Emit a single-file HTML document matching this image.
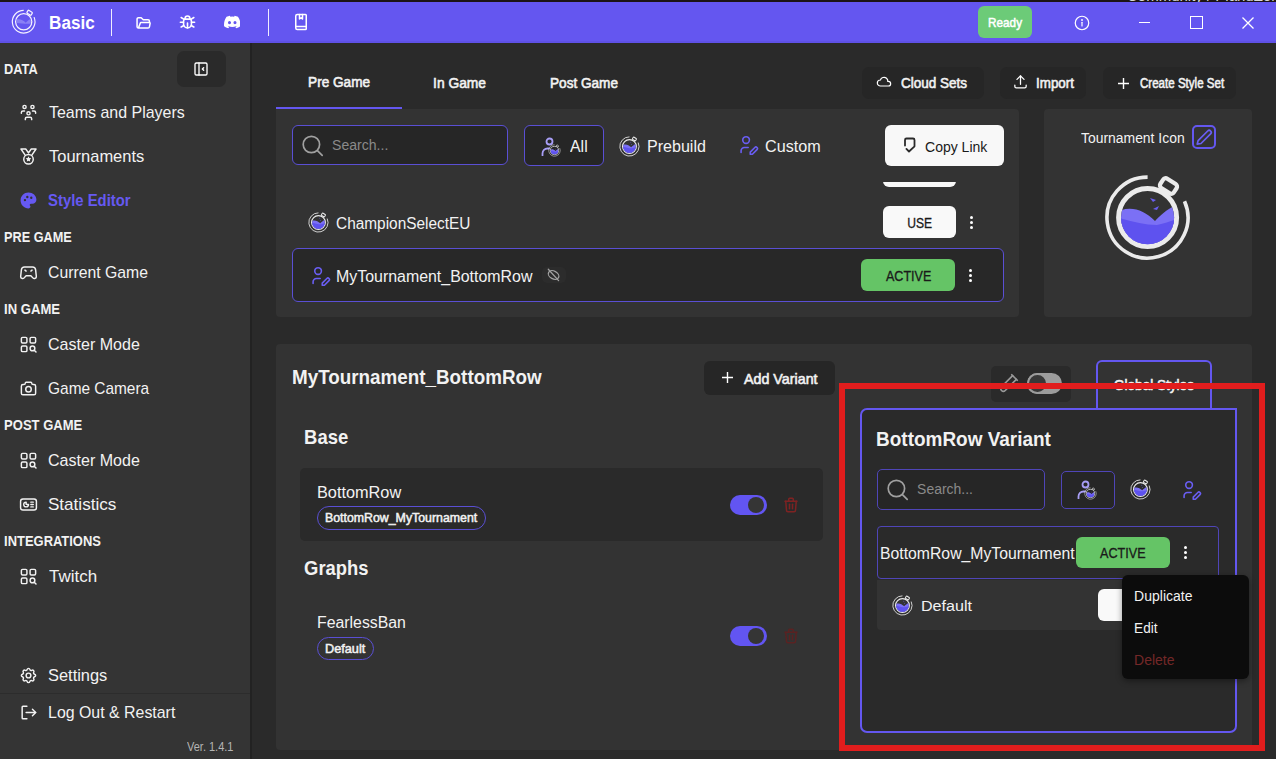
<!DOCTYPE html>
<html><head><meta charset="utf-8"><style>
html,body{margin:0;padding:0;}
body{width:1276px;height:759px;position:relative;overflow:hidden;background:#2a2a2a;font-family:"Liberation Sans",sans-serif;}
.t{position:absolute;white-space:nowrap;}
</style></head><body>

<svg width="0" height="0" style="position:absolute">
<defs>
<clipPath id="lc"><circle cx="52.6" cy="52.6" r="26.6"/></clipPath>
<symbol id="logo" viewBox="0 0 105 105">
  <path d="M52.6 12.1 A40.5 40.5 0 1 0 89.5 36.2" stroke="#ebebeb" stroke-width="3.6" fill="none" stroke-linecap="butt"/>
  <circle cx="52.6" cy="52.6" r="29" stroke="#ebebeb" stroke-width="5" fill="none"/>
  <rect x="65.5" y="15.5" width="16" height="11" rx="3" transform="rotate(33 73.5 21)" stroke="#ebebeb" stroke-width="4.2" fill="none"/>
  <g clip-path="url(#lc)">
    <path d="M20 48 C34 40 48 44 60 56 C66 50 72 44 82 40 L82 90 L20 90 Z" fill="#7b70f5"/>
    <path d="M20 52 C36 56 48 60 62 60 C70 58 76 56 82 54 L82 90 L20 90 Z" fill="#5e52ef"/>
    <path d="M20 66 C30 68 40 74 46 82 L20 90 Z" fill="#7468f3"/>
  </g>
  <path d="M55 33 l6 2 l-3 2 z" fill="#6a5ef2"/>
  <path d="M58 44 l6 -3 l-2 4 z" fill="#6a5ef2"/>
</symbol>
<symbol id="logow" viewBox="0 0 105 105">
  <path d="M52.6 12.1 A40.5 40.5 0 1 0 89.5 36.2" stroke="#f4f2ff" stroke-width="4.2" fill="none"/>
  <circle cx="52.6" cy="52.6" r="29" stroke="#f4f2ff" stroke-width="4.6" fill="none"/>
  <rect x="64.5" y="14.5" width="18" height="12" rx="3" transform="rotate(33 73.5 21)" stroke="#f4f2ff" stroke-width="4.4" fill="none"/>
  <g clip-path="url(#lc)">
    <path d="M20 48 C34 40 48 44 60 56 C66 50 72 44 82 40 L82 58 C70 62 50 60 20 56 Z" fill="#8a80f5"/>
  </g>
</symbol>
</defs></svg>
<div style="position:absolute;left:0px;top:0px;width:1276px;height:2px;background:#1c1416"></div>
<div style="position:absolute;left:0;top:0;width:1276px;height:2px;overflow:hidden"><div class="t" style="left:1127px;top:-12.5px;font-size:15px;line-height:15px;color:#d8d8d8">Community / PlanuZomohd</div></div>
<div style="position:absolute;left:0px;top:2px;width:1276px;height:41px;background:#6456f0"></div>
<div style="position:absolute;left:0px;top:40.5px;width:1276px;height:2.5px;background:#5f51e6"></div>
<svg style="position:absolute;left:9.32px;top:7.42px" width="29.36" height="29.36"><use href="#logow"/></svg>
<div class="t" style="left:48.50px;top:8px;font-size:19.2px;line-height:30px;font-weight:700;color:#ffffff;transform:scaleX(0.8900);transform-origin:1.00px 0;">Basic</div>
<div style="position:absolute;left:111.2px;top:8.5px;width:1.2000000000000028px;height:27.5px;background:#f0eeff"></div>
<div style="position:absolute;left:267.8px;top:8.5px;width:1.1999999999999886px;height:27.5px;background:#f0eeff"></div>
<svg style="position:absolute;left:135px;top:14.5px;" width="16.5" height="16.5" viewBox="0 0 24 24" fill="none"><path d="M5 19l2.757 -7.351a1 1 0 0 1 .936 -.649h12.307a1 1 0 0 1 .986 1.164l-.996 5.211a2 2 0 0 1 -1.964 1.625h-14.026a2 2 0 0 1 -2 -2v-11a2 2 0 0 1 2 -2h4l3 3h7a2 2 0 0 1 2 2v2" stroke="#fff" stroke-width="2.2" stroke-linecap="round" stroke-linejoin="round"/></svg>
<svg style="position:absolute;left:178px;top:12.3px;stroke:#fff;stroke-width:2;stroke-linecap:round;stroke-linejoin:round" width="19" height="19" viewBox="0 0 24 24" fill="none"><path d="M9 9v-1a3 3 0 0 1 6 0v1"/><path d="M8 9h8a6 6 0 0 1 1 3v3a5 5 0 0 1 -10 0v-3a6 6 0 0 1 1 -3"/><path d="M3 13l4 0"/><path d="M17 13l4 0"/><path d="M12 20l0 -6"/><path d="M4 19l3.35 -2"/><path d="M20 19l-3.35 -2"/><path d="M4 7l3.75 2.4"/><path d="M20 7l-3.75 2.4"/></svg>
<svg style="position:absolute;left:223.5px;top:15px;" width="16.5" height="14" viewBox="0 2 24 20" fill="none"><path fill="#fff" d="M20.3 4.4A19.8 19.8 0 0 0 15.4 2.9a13.7 13.7 0 0 0-.6 1.3 18.4 18.4 0 0 0-5.5 0A13.7 13.7 0 0 0 8.6 2.9 19.7 19.7 0 0 0 3.7 4.4C.6 9.1-.3 13.6.1 18.1a19.9 19.9 0 0 0 6.1 3.1 14.7 14.7 0 0 0 1.3-2.1 12.9 12.9 0 0 1-2-1c.2-.1.3-.2.5-.4a14.2 14.2 0 0 0 12.1 0l.5.4a12.9 12.9 0 0 1-2 1 14.7 14.7 0 0 0 1.3 2.1 19.8 19.8 0 0 0 6.1-3.1c.5-5.2-.9-9.7-3.7-13.7zM8 15.3c-1.2 0-2.2-1.1-2.2-2.4s1-2.4 2.2-2.4 2.2 1.1 2.2 2.4-1 2.4-2.2 2.4zm8 0c-1.2 0-2.2-1.1-2.2-2.4s1-2.4 2.2-2.4 2.2 1.1 2.2 2.4-1 2.4-2.2 2.4z"/></svg>
<svg style="position:absolute;left:292px;top:13px;stroke:#fff;stroke-width:2;stroke-linecap:round;stroke-linejoin:round" width="18" height="18" viewBox="0 0 24 24" fill="none"><path d="M5 4a2 2 0 0 1 2 -2h11a1 1 0 0 1 1 1v18a1 1 0 0 1 -1 1h-11a2 2 0 0 1 -2 -2z"/><path d="M5 18h14"/><path d="M10 2v6l2 -1.5l2 1.5v-6"/></svg>
<div style="position:absolute;left:978px;top:6px;width:54px;height:32px;background:#6ccb78;border-radius:6px"></div>
<div class="t" style="left:988.00px;top:8px;font-size:12.8px;line-height:30px;font-weight:400;color:#ffffff;transform:scaleX(0.9167);transform-origin:1.00px 0;-webkit-text-stroke:0.51px #ffffff;">Ready</div>
<svg style="position:absolute;left:1073px;top:13.5px;stroke:#fff;stroke-width:1.6;stroke-linecap:round" width="18" height="18" viewBox="0 0 24 24" fill="none"><circle cx="12" cy="12" r="9"/><path d="M12 11v5"/><path d="M12 8h.01" stroke-width="2.4"/></svg>
<div style="position:absolute;left:1139px;top:22px;width:11px;height:1.1999999999999993px;background:#fff"></div>
<div style="position:absolute;left:1190px;top:16px;width:13px;height:13px;border:1.3px solid #fff;box-sizing:border-box"></div>
<svg style="position:absolute;left:1242px;top:17px;" width="12" height="12" viewBox="0 0 12 12" fill="none"><path d="M0.5 0.5L11.5 11.5M11.5 0.5L0.5 11.5" stroke="#fff" stroke-width="1.3"/></svg>
<div style="position:absolute;left:0px;top:43px;width:250px;height:716px;background:#343434"></div>
<div style="position:absolute;left:250px;top:43px;width:2px;height:716px;background:#222222"></div>
<div class="t" style="left:3.90px;top:54px;font-size:14.45px;line-height:30px;font-weight:700;color:#f2f2f2;transform:scaleX(0.8838);transform-origin:1.00px 0;">DATA</div>
<div style="position:absolute;left:177px;top:51px;width:49px;height:36px;background:#2a2a2a;border-radius:7px"></div>
<svg style="position:absolute;left:193px;top:61px;stroke:#fff;stroke-width:2;stroke-linecap:round;stroke-linejoin:round" width="16" height="16" viewBox="0 0 24 24" fill="none"><rect x="3" y="3" width="18" height="18" rx="2"/><path d="M9 3v18"/><path d="M16 10l-2 2l2 2"/></svg>
<div class="t" style="left:48.80px;top:98px;font-size:16.55px;line-height:30px;font-weight:400;color:#f2f2f2;transform:scaleX(0.9657);transform-origin:0.00px 0;">Teams and Players</div>
<svg style="position:absolute;left:18.5px;top:102.8px;stroke:#f2f2f2;stroke-width:1.85;stroke-linecap:round;stroke-linejoin:round" width="19" height="19" viewBox="0 0 24 24" fill="none"><path d="M10 13a2 2 0 1 0 4 0a2 2 0 0 0 -4 0"/><path d="M8 21v-1a2 2 0 0 1 2 -2h4a2 2 0 0 1 2 2v1"/><path d="M15 5a2 2 0 1 0 4 0a2 2 0 0 0 -4 0"/><path d="M17 10h2a2 2 0 0 1 2 2v1"/><path d="M5 5a2 2 0 1 0 4 0a2 2 0 0 0 -4 0"/><path d="M3 13v-1a2 2 0 0 1 2 -2h2"/></svg>
<div class="t" style="left:48.80px;top:142px;font-size:16.55px;line-height:30px;font-weight:400;color:#f2f2f2;transform:scaleX(0.9968);transform-origin:0.00px 0;">Tournaments</div>
<svg style="position:absolute;left:18.5px;top:146.8px;stroke:#f2f2f2;stroke-width:1.85;stroke-linecap:round;stroke-linejoin:round" width="19" height="19" viewBox="0 0 24 24" fill="none"><path d="M2.5 2.5h6l3.5 5l3.5-5h6l-5.5 8M2.5 2.5l5.5 8"/><circle cx="12" cy="15.5" r="6"/><path d="M12 11.8l1.1 2.2l2.4.35l-1.75 1.7l.4 2.4l-2.15-1.15l-2.15 1.15l.4-2.4l-1.75-1.7l2.4-.35z" fill="#f2f2f2" stroke="none"/></svg>
<div class="t" style="left:47.80px;top:186px;font-size:16.55px;line-height:30px;font-weight:700;color:#6659f2;transform:scaleX(0.8978);transform-origin:1.00px 0;">Style Editor</div>
<svg style="position:absolute;left:18.5px;top:190.8px;stroke:#6659f2;stroke-width:1.85;stroke-linecap:round;stroke-linejoin:round" width="19" height="19" viewBox="0 0 24 24" fill="none"><path fill="#6659f2" stroke="none" d="M12 2c5.5 0 10 4 10 9c0 2.8-2.2 5-5 5h-2a1.5 1.5 0 0 0-1 2.6c.3.3.5.7.5 1.1c0 1.3-1.2 2.3-2.5 2.3C6.5 22 2 17.5 2 12S6.5 2 12 2zM7.5 10a1.5 1.5 0 1 0 0 3a1.5 1.5 0 0 0 0-3zm3-4a1.5 1.5 0 1 0 0 3a1.5 1.5 0 0 0 0-3zm5 1a1.5 1.5 0 1 0 0 3a1.5 1.5 0 0 0 0-3z"/></svg>
<div class="t" style="left:3.70px;top:222px;font-size:14.45px;line-height:30px;font-weight:700;color:#f2f2f2;transform:scaleX(0.8789);transform-origin:1.00px 0;">PRE GAME</div>
<div class="t" style="left:47.80px;top:258px;font-size:16.55px;line-height:30px;font-weight:400;color:#f2f2f2;transform:scaleX(0.9534);transform-origin:1.00px 0;">Current Game</div>
<svg style="position:absolute;left:18.5px;top:262.8px;stroke:#f2f2f2;stroke-width:1.85;stroke-linecap:round;stroke-linejoin:round" width="19" height="19" viewBox="0 0 24 24" fill="none"><path d="M7 5h10a4 4 0 0 1 4 3.6l.9 8.4a2.5 2.5 0 0 1-4.4 1.8L15 16H9l-2.5 2.8A2.5 2.5 0 0 1 2.1 17L3 8.6A4 4 0 0 1 7 5z"/><path d="M7.5 9l1.5 1.2M16.5 9l-1.5 1.2"/></svg>
<div class="t" style="left:3.70px;top:294px;font-size:14.45px;line-height:30px;font-weight:700;color:#f2f2f2;transform:scaleX(0.9066);transform-origin:1.00px 0;">IN GAME</div>
<div class="t" style="left:47.80px;top:330px;font-size:16.55px;line-height:30px;font-weight:400;color:#f2f2f2;transform:scaleX(0.9699);transform-origin:1.00px 0;">Caster Mode</div>
<svg style="position:absolute;left:18.5px;top:334.8px;stroke:#f2f2f2;stroke-width:1.85;stroke-linecap:round;stroke-linejoin:round" width="19" height="19" viewBox="0 0 24 24" fill="none"><rect x="3" y="3" width="7" height="7" rx="1.5"/><rect x="14" y="3" width="7" height="7" rx="1.5"/><rect x="3" y="14" width="7" height="7" rx="1.5"/><circle cx="17" cy="17" r="3"/><path d="M19.2 19.2l2.3 2.3"/></svg>
<div class="t" style="left:47.80px;top:374px;font-size:16.55px;line-height:30px;font-weight:400;color:#f2f2f2;transform:scaleX(0.9324);transform-origin:1.00px 0;">Game Camera</div>
<svg style="position:absolute;left:18.5px;top:378.8px;stroke:#f2f2f2;stroke-width:1.85;stroke-linecap:round;stroke-linejoin:round" width="19" height="19" viewBox="0 0 24 24" fill="none"><path d="M5 7h1a2 2 0 0 0 2 -2a1 1 0 0 1 1 -1h6a1 1 0 0 1 1 1a2 2 0 0 0 2 2h1a2 2 0 0 1 2 2v9a2 2 0 0 1 -2 2h-14a2 2 0 0 1 -2 -2v-9a2 2 0 0 1 2 -2"/><circle cx="12" cy="13" r="3.5"/></svg>
<div class="t" style="left:3.70px;top:410px;font-size:14.45px;line-height:30px;font-weight:700;color:#f2f2f2;transform:scaleX(0.9012);transform-origin:1.00px 0;">POST GAME</div>
<div class="t" style="left:47.80px;top:446px;font-size:16.55px;line-height:30px;font-weight:400;color:#f2f2f2;transform:scaleX(0.9699);transform-origin:1.00px 0;">Caster Mode</div>
<svg style="position:absolute;left:18.5px;top:450.8px;stroke:#f2f2f2;stroke-width:1.85;stroke-linecap:round;stroke-linejoin:round" width="19" height="19" viewBox="0 0 24 24" fill="none"><rect x="3" y="3" width="7" height="7" rx="1.5"/><rect x="14" y="3" width="7" height="7" rx="1.5"/><rect x="3" y="14" width="7" height="7" rx="1.5"/><circle cx="17" cy="17" r="3"/><path d="M19.2 19.2l2.3 2.3"/></svg>
<div class="t" style="left:47.80px;top:490px;font-size:16.55px;line-height:30px;font-weight:400;color:#f2f2f2;transform:scaleX(1.0338);transform-origin:1.00px 0;">Statistics</div>
<svg style="position:absolute;left:18.5px;top:494.8px;stroke:#f2f2f2;stroke-width:1.85;stroke-linecap:round;stroke-linejoin:round" width="19" height="19" viewBox="0 0 24 24" fill="none"><rect x="2" y="5" width="20" height="14" rx="3"/><path d="M9 9a3 3 0 1 0 3 3h-3z" fill="currentColor"/><path d="M15 9h3M15 12h3M15 15h3"/></svg>
<div class="t" style="left:3.70px;top:526px;font-size:14.45px;line-height:30px;font-weight:700;color:#f2f2f2;transform:scaleX(0.8963);transform-origin:1.00px 0;">INTEGRATIONS</div>
<div class="t" style="left:48.80px;top:562px;font-size:16.55px;line-height:30px;font-weight:400;color:#f2f2f2;transform:scaleX(1.0261);transform-origin:0.00px 0;">Twitch</div>
<svg style="position:absolute;left:18.5px;top:566.8px;stroke:#f2f2f2;stroke-width:1.85;stroke-linecap:round;stroke-linejoin:round" width="19" height="19" viewBox="0 0 24 24" fill="none"><rect x="3" y="3" width="7" height="7" rx="1.5"/><rect x="14" y="3" width="7" height="7" rx="1.5"/><rect x="3" y="14" width="7" height="7" rx="1.5"/><circle cx="17" cy="17" r="3"/><path d="M19.2 19.2l2.3 2.3"/></svg>
<div class="t" style="left:47.80px;top:661px;font-size:16.55px;line-height:30px;font-weight:400;color:#f2f2f2;transform:scaleX(0.9931);transform-origin:1.00px 0;">Settings</div>
<svg style="position:absolute;left:18.5px;top:665.8px;stroke:#f2f2f2;stroke-width:1.85;stroke-linecap:round;stroke-linejoin:round" width="19" height="19" viewBox="0 0 24 24" fill="none"><path d="M10.325 4.317c.426 -1.756 2.924 -1.756 3.35 0a1.724 1.724 0 0 0 2.573 1.066c1.543 -.94 3.31 .826 2.37 2.37a1.724 1.724 0 0 0 1.065 2.572c1.756 .426 1.756 2.924 0 3.35a1.724 1.724 0 0 0 -1.066 2.573c.94 1.543 -.826 3.31 -2.37 2.37a1.724 1.724 0 0 0 -2.572 1.065c-.426 1.756 -2.924 1.756 -3.35 0a1.724 1.724 0 0 0 -2.573 -1.066c-1.543 .94 -3.31 -.826 -2.37 -2.37a1.724 1.724 0 0 0 -1.065 -2.572c-1.756 -.426 -1.756 -2.924 0 -3.35a1.724 1.724 0 0 0 1.066 -2.573c-.94 -1.543 .826 -3.31 2.37 -2.37c1 .608 2.296 .07 2.572 -1.065z"/><circle cx="12" cy="12" r="3"/></svg>
<div style="position:absolute;left:0px;top:693px;width:250px;height:1.2000000000000455px;background:#2c2c2c"></div>
<div class="t" style="left:47.80px;top:698px;font-size:16.55px;line-height:30px;font-weight:400;color:#f2f2f2;transform:scaleX(0.9618);transform-origin:1.00px 0;">Log Out &amp; Restart</div>
<svg style="position:absolute;left:18.5px;top:702.8px;stroke:#f2f2f2;stroke-width:1.85;stroke-linecap:round;stroke-linejoin:round" width="19" height="19" viewBox="0 0 24 24" fill="none"><path d="M10 4H5a1 1 0 0 0-1 1v14a1 1 0 0 0 1 1h5"/><path d="M9 12h12"/><path d="M17 8l4 4l-4 4"/></svg>
<div class="t" style="left:186.80px;top:732px;font-size:12.65px;line-height:30px;font-weight:400;color:#b4b4b4;transform:scaleX(0.8698);transform-origin:0.00px 0;">Ver. 1.4.1</div>
<div class="t" style="left:308.00px;top:67px;font-size:14.55px;line-height:30px;font-weight:400;color:#f2f2f2;transform:scaleX(0.9354);transform-origin:1.00px 0;-webkit-text-stroke:0.58px #f2f2f2;">Pre Game</div>
<div class="t" style="left:433.00px;top:68px;font-size:14.55px;line-height:30px;font-weight:400;color:#f2f2f2;transform:scaleX(0.9491);transform-origin:1.00px 0;-webkit-text-stroke:0.58px #f2f2f2;">In Game</div>
<div class="t" style="left:550.40px;top:68px;font-size:14.55px;line-height:30px;font-weight:400;color:#f2f2f2;transform:scaleX(0.9333);transform-origin:1.00px 0;-webkit-text-stroke:0.58px #f2f2f2;">Post Game</div>
<div style="position:absolute;left:276px;top:107px;width:126px;height:2px;background:#6457f0"></div>
<div style="position:absolute;left:862px;top:67px;width:122px;height:32px;background:#262626;border-radius:7px"></div>
<svg style="position:absolute;left:876px;top:74px;stroke:#fff;stroke-width:1.8;stroke-linecap:round;stroke-linejoin:round" width="16" height="16" viewBox="0 0 24 24" fill="none"><path d="M6.657 18c-2.572 0 -4.657 -2.007 -4.657 -4.483c0 -2.475 2.085 -4.482 4.657 -4.482c.393 -1.762 1.794 -3.2 3.675 -3.773c1.88 -.572 3.956 -.193 5.444 1c1.488 1.19 2.162 3.007 1.77 4.769h.99c1.913 0 3.464 1.56 3.464 3.486c0 1.927 -1.551 3.487 -3.465 3.487h-11.878"/></svg>
<div class="t" style="left:900.80px;top:68px;font-size:14.25px;line-height:30px;font-weight:400;color:#f2f2f2;transform:scaleX(0.9486);transform-origin:0.00px 0;-webkit-text-stroke:0.57px #f2f2f2;">Cloud Sets</div>
<div style="position:absolute;left:1000px;top:67px;width:86px;height:32px;background:#262626;border-radius:7px"></div>
<svg style="position:absolute;left:1012px;top:73px;stroke:#fff;stroke-width:1.8;stroke-linecap:round;stroke-linejoin:round" width="17" height="17" viewBox="0 0 24 24" fill="none"><path d="M4 17v2a2 2 0 0 0 2 2h12a2 2 0 0 0 2 -2v-2"/><path d="M7 9l5 -5l5 5"/><path d="M12 4l0 12"/></svg>
<div class="t" style="left:1036.30px;top:68px;font-size:14.25px;line-height:30px;font-weight:400;color:#f2f2f2;transform:scaleX(0.9375);transform-origin:1.00px 0;-webkit-text-stroke:0.57px #f2f2f2;">Import</div>
<div style="position:absolute;left:1103px;top:67px;width:133px;height:32px;background:#262626;border-radius:7px"></div>
<svg style="position:absolute;left:1117.5px;top:77.5px;stroke:#fff;stroke-width:1.4" width="11" height="11" viewBox="0 0 11 11" fill="none"><path d="M5.5 0v11M0 5.5h11"/></svg>
<div class="t" style="left:1139.70px;top:68px;font-size:14.25px;line-height:30px;font-weight:400;color:#f2f2f2;transform:scaleX(0.8106);transform-origin:0.00px 0;-webkit-text-stroke:0.57px #f2f2f2;">Create Style Set</div>
<div style="position:absolute;left:276px;top:109px;width:743px;height:208px;background:#333333;border-radius:0 4px 4px 4px"></div>
<div style="position:absolute;left:292px;top:125px;width:216px;height:40px;background:#262626;border:1px solid #5a4fd4;border-radius:6px;box-sizing:border-box"></div>
<svg style="position:absolute;left:301px;top:134px;stroke:#a0a0a0;stroke-width:1.7;stroke-linecap:round" width="24" height="24" viewBox="0 0 24 24" fill="none"><circle cx="10.4" cy="10.5" r="8.2"/><path d="M16.4 16.6l4.8 4.8"/></svg>
<div class="t" style="left:332.00px;top:130px;font-size:15.1px;line-height:30px;font-weight:400;color:#8a8a8a;transform:scaleX(0.9310);transform-origin:1.00px 0;">Search...</div>
<div style="position:absolute;left:524px;top:125px;width:80px;height:41px;background:#262626;border:1px solid #5a4fd4;border-radius:6px;box-sizing:border-box"></div>
<svg style="position:absolute;left:541px;top:137px;stroke:#a89ef6;stroke-width:1.8;stroke-linecap:round" width="16" height="19" viewBox="0 0 16 19" fill="none"><circle cx="8.5" cy="4.5" r="3"/><path d="M1.5 18.5v-2a5 5 0 0 1 5-5h1.5"/></svg>
<svg style="position:absolute;left:547.04px;top:143.04px" width="14.93" height="14.93"><use href="#logo"/></svg>
<div class="t" style="left:569.50px;top:132px;font-size:16.0px;line-height:30px;font-weight:400;color:#f2f2f2;transform:scaleX(0.9941);transform-origin:0.00px 0;">All</div>
<svg style="position:absolute;left:617.36px;top:133.56px" width="24.88" height="24.88"><use href="#logo"/></svg>
<div class="t" style="left:647.40px;top:132px;font-size:16.0px;line-height:30px;font-weight:400;color:#f2f2f2;transform:scaleX(1.0035);transform-origin:1.00px 0;">Prebuild</div>
<svg style="position:absolute;left:739px;top:135px;stroke:#6a5ef3;stroke-width:1.9;stroke-linecap:round;stroke-linejoin:round" width="20" height="20" viewBox="0 0 24 24" fill="none"><circle cx="8.5" cy="6" r="4"/><path d="M2.5 21v-2a4 4 0 0 1 4 -4h4.5"/><path d="M13.5 20.5l5.5 -5.5a1.8 1.8 0 0 1 2.6 2.6l-5.5 5.5h-2.6z"/></svg>
<div class="t" style="left:765.30px;top:132px;font-size:16.0px;line-height:30px;font-weight:400;color:#f2f2f2;transform:scaleX(1.0094);transform-origin:1.00px 0;">Custom</div>
<div style="position:absolute;left:885px;top:125px;width:119px;height:41px;background:#f8f8f8;border-radius:6px"></div>
<svg style="position:absolute;left:898px;top:132px;stroke:#2a2a2a;stroke-width:1.8;stroke-linecap:round;stroke-linejoin:round" width="24" height="24" viewBox="0 0 24 24" fill="none"><path d="M7 13.6V8a1.5 1.5 0 0 1 1.5-1.5h6.5a1.5 1.5 0 0 1 1.5 1.5v6.3L11 19.5l-2.6-2.6"/></svg>
<div class="t" style="left:924.60px;top:132px;font-size:14.55px;line-height:30px;font-weight:400;color:#1a1a1a;transform:scaleX(0.9625);transform-origin:1.00px 0;">Copy Link</div>
<div style="position:absolute;left:883px;top:182px;width:73px;height:6px;overflow:hidden"><div style="position:absolute;left:0;top:-27px;width:73px;height:31.7px;background:#f8f8f8;border-radius:6px"></div></div>
<svg style="position:absolute;left:305.76px;top:209.76px" width="24.88" height="24.88"><use href="#logo"/></svg>
<div class="t" style="left:335.60px;top:209px;font-size:16.0px;line-height:30px;font-weight:400;color:#f2f2f2;transform:scaleX(0.9623);transform-origin:1.00px 0;">ChampionSelectEU</div>
<div style="position:absolute;left:883px;top:206px;width:73px;height:32px;background:#f9f9f9;border-radius:6px"></div>
<div class="t" style="left:906.50px;top:208px;font-size:14.55px;line-height:30px;font-weight:400;color:#1a1a1a;transform:scaleX(0.8310);transform-origin:1.00px 0;-webkit-text-stroke:0.32px #1a1a1a;">USE</div>
<div style="position:absolute;left:969.9px;top:215.6px;width:3.2000000000000455px;height:3.1999999999999886px;background:#fff;border-radius:50%"></div>
<div style="position:absolute;left:969.9px;top:220.6px;width:3.2000000000000455px;height:3.1999999999999886px;background:#fff;border-radius:50%"></div>
<div style="position:absolute;left:969.9px;top:225.6px;width:3.2000000000000455px;height:3.1999999999999886px;background:#fff;border-radius:50%"></div>
<div style="position:absolute;left:292px;top:248px;width:712px;height:54px;background:#282828;border:1px solid #5a4fd4;border-radius:6px;box-sizing:border-box"></div>
<svg style="position:absolute;left:310.5px;top:265.5px;stroke:#6a5ef3;stroke-width:1.9;stroke-linecap:round;stroke-linejoin:round" width="20" height="20" viewBox="0 0 24 24" fill="none"><circle cx="8.5" cy="6" r="4"/><path d="M2.5 21v-2a4 4 0 0 1 4 -4h4.5"/><path d="M13.5 20.5l5.5 -5.5a1.8 1.8 0 0 1 2.6 2.6l-5.5 5.5h-2.6z"/></svg>
<div class="t" style="left:336.40px;top:262px;font-size:16.0px;line-height:30px;font-weight:400;color:#f2f2f2;transform:scaleX(0.9949);transform-origin:1.00px 0;">MyTournament_BottomRow</div>
<div style="position:absolute;left:541.8px;top:266.5px;width:24.200000000000045px;height:16.5px;background:#2c2c2c;border-radius:5px"></div>
<svg style="position:absolute;left:538px;top:262px;stroke:#a0a0a0;stroke-width:1.3;stroke-linecap:round" width="32" height="26" viewBox="538 262 32 26" fill="none"><ellipse cx="553.6" cy="275" rx="5.6" ry="3.9" transform="rotate(28 553.6 275)"/><path d="M548.3 269.2L558.6 280.6"/></svg>
<div style="position:absolute;left:861px;top:259px;width:94px;height:32px;background:#65c466;border-radius:6px"></div>
<div class="t" style="left:885.70px;top:261px;font-size:13.95px;line-height:30px;font-weight:400;color:#1a1a1a;transform:scaleX(0.9000);transform-origin:0.00px 0;-webkit-text-stroke:0.31px #1a1a1a;">ACTIVE</div>
<div style="position:absolute;left:969.3px;top:268.59999999999997px;width:3.2000000000000455px;height:3.2000000000000455px;background:#fff;border-radius:50%"></div>
<div style="position:absolute;left:969.3px;top:273.59999999999997px;width:3.2000000000000455px;height:3.2000000000000455px;background:#fff;border-radius:50%"></div>
<div style="position:absolute;left:969.3px;top:278.59999999999997px;width:3.2000000000000455px;height:3.2000000000000455px;background:#fff;border-radius:50%"></div>
<div style="position:absolute;left:1044px;top:109px;width:208px;height:208px;background:#333333;border-radius:4px"></div>
<div class="t" style="left:1080.60px;top:123px;font-size:14.55px;line-height:30px;font-weight:400;color:#f2f2f2;transform:scaleX(0.9565);transform-origin:0.00px 0;">Tournament Icon</div>
<div style="position:absolute;left:1192px;top:125px;width:24px;height:24px;border:2px solid #6457f0;border-radius:5px;box-sizing:border-box"></div>
<svg style="position:absolute;left:1192px;top:125px;stroke:#6a5ef3;stroke-width:1.7;stroke-linecap:round;stroke-linejoin:round" width="24" height="24" viewBox="0 0 24 24" fill="none"><path d="M5.2 19.2l.9-3.6l9.6-9.6a2.05 2.05 0 0 1 2.9 2.9l-9.6 9.6z"/></svg>
<svg style="position:absolute;left:1095.10px;top:165.10px" width="105.00" height="105.00"><use href="#logo"/></svg>
<div style="position:absolute;left:276px;top:344px;width:976px;height:406px;background:#333333;border-radius:4px"></div>
<div class="t" style="left:292.10px;top:362px;font-size:20.05px;line-height:30px;font-weight:700;color:#f2f2f2;transform:scaleX(0.9396);transform-origin:1.00px 0;">MyTournament_BottomRow</div>
<div style="position:absolute;left:704px;top:361px;width:131px;height:34px;background:#262626;border-radius:6px"></div>
<svg style="position:absolute;left:722px;top:372.3px;stroke:#fff;stroke-width:1.4" width="11" height="11" viewBox="0 0 11 11" fill="none"><path d="M5.5 0v11M0 5.5h11"/></svg>
<div class="t" style="left:744.10px;top:364px;font-size:14.4px;line-height:30px;font-weight:400;color:#f2f2f2;transform:scaleX(0.9920);transform-origin:0.00px 0;-webkit-text-stroke:0.58px #f2f2f2;">Add Variant</div>
<div class="t" style="left:304.20px;top:422px;font-size:20.2px;line-height:30px;font-weight:700;color:#f2f2f2;transform:scaleX(0.9149);transform-origin:1.00px 0;">Base</div>
<div style="position:absolute;left:300px;top:468px;width:523px;height:73px;background:#2a2a2a;border-radius:5px"></div>
<div class="t" style="left:316.60px;top:478px;font-size:16.0px;line-height:30px;font-weight:400;color:#f2f2f2;transform:scaleX(1.0183);transform-origin:1.00px 0;">BottomRow</div>
<div style="position:absolute;left:317px;top:506px;width:169px;height:24px;border:1px solid #5a4fd4;border-radius:12px;box-sizing:border-box"></div>
<div class="t" style="left:325.30px;top:503px;font-size:12.05px;line-height:30px;font-weight:400;color:#f2f2f2;transform:scaleX(1.0243);transform-origin:1.00px 0;-webkit-text-stroke:0.48px #f2f2f2;">BottomRow_MyTournament</div>
<div style="position:absolute;left:729.5px;top:495px;width:37.0px;height:20px;background:#6255f2;border-radius:10px"></div>
<div style="position:absolute;left:748.0px;top:497px;width:16.0px;height:16px;background:#353535;border-radius:50%"></div>
<svg style="position:absolute;left:781.5px;top:495.5px;stroke:#7e2222;stroke-width:2;stroke-linecap:round;stroke-linejoin:round" width="18" height="18" viewBox="0 0 24 24" fill="none"><path d="M4 7h16"/><path d="M10 11v6"/><path d="M14 11v6"/><path d="M5 7l1 12a2 2 0 0 0 2 2h8a2 2 0 0 0 2 -2l1 -12"/><path d="M9 7v-3a1 1 0 0 1 1 -1h4a1 1 0 0 1 1 1v3"/></svg>
<div class="t" style="left:303.80px;top:553px;font-size:20.35px;line-height:30px;font-weight:700;color:#f2f2f2;transform:scaleX(0.9029);transform-origin:1.00px 0;">Graphs</div>
<div class="t" style="left:316.70px;top:608px;font-size:16.0px;line-height:30px;font-weight:400;color:#f2f2f2;transform:scaleX(0.9898);transform-origin:1.00px 0;">FearlessBan</div>
<div style="position:absolute;left:317px;top:637px;width:57px;height:23px;border:1px solid #5a4fd4;border-radius:12px;box-sizing:border-box"></div>
<div class="t" style="left:325.00px;top:634px;font-size:12.2px;line-height:30px;font-weight:400;color:#f2f2f2;transform:scaleX(1.0447);transform-origin:1.00px 0;-webkit-text-stroke:0.49px #f2f2f2;">Default</div>
<div style="position:absolute;left:729.5px;top:625.5px;width:37.0px;height:20.0px;background:#6255f2;border-radius:10px"></div>
<div style="position:absolute;left:748.0px;top:627.5px;width:16.0px;height:16.0px;background:#353535;border-radius:50%"></div>
<svg style="position:absolute;left:781.5px;top:626.5px;stroke:#5a2222;stroke-width:2;stroke-linecap:round;stroke-linejoin:round" width="18" height="18" viewBox="0 0 24 24" fill="none"><path d="M4 7h16"/><path d="M10 11v6"/><path d="M14 11v6"/><path d="M5 7l1 12a2 2 0 0 0 2 2h8a2 2 0 0 0 2 -2l1 -12"/><path d="M9 7v-3a1 1 0 0 1 1 -1h4a1 1 0 0 1 1 1v3"/></svg>
<div style="position:absolute;left:991px;top:365.5px;width:80px;height:36.5px;background:#2a2a2a;border-radius:5px"></div>
<svg style="position:absolute;left:998px;top:372px;stroke:#9a9a9a;stroke-width:1.8;stroke-linecap:round;stroke-linejoin:round" width="22" height="22" viewBox="0 0 24 24" fill="none"><path d="M20 8.04l-12.122 12.124a2.857 2.857 0 1 1 -4.041 -4.04l12.122 -12.124"/><path d="M15 3l6 6"/></svg>
<div style="position:absolute;left:1027.3px;top:373.2px;width:35.200000000000045px;height:20.69999999999999px;background:#9c9c9c;border-radius:11px"></div>
<div style="position:absolute;left:1027.3px;top:373.2px;width:20.700000000000045px;height:20.69999999999999px;background:#383838;border:2px solid #9c9c9c;box-sizing:border-box;border-radius:50%"></div>
<div style="position:absolute;left:1095.5px;top:360px;width:116.5px;height:52px;border:2px solid #6457f0;border-radius:6px 6px 0 0;box-sizing:border-box;border-bottom:none"></div>
<div class="t" style="left:1113.80px;top:370px;font-size:15.1px;line-height:30px;font-weight:400;color:#f2f2f2;transform:scaleX(0.8989);transform-origin:0.00px 0;-webkit-text-stroke:0.6px #f2f2f2;">Global Styles</div>
<div style="position:absolute;left:859.5px;top:408px;width:377.0px;height:325px;background:#2a2a2a;border:2px solid #6457f0;border-radius:7px 0 7px 7px;box-sizing:border-box"></div>
<div class="t" style="left:876.40px;top:424px;font-size:19.9px;line-height:30px;font-weight:700;color:#f2f2f2;transform:scaleX(0.9533);transform-origin:1.00px 0;">BottomRow Variant</div>
<div style="position:absolute;left:877px;top:469px;width:168px;height:41px;background:#262626;border:1px solid #4f45b8;border-radius:5px;box-sizing:border-box"></div>
<svg style="position:absolute;left:885.6px;top:478px;stroke:#a0a0a0;stroke-width:1.7;stroke-linecap:round" width="24" height="24" viewBox="0 0 24 24" fill="none"><circle cx="10.4" cy="10.5" r="8.2"/><path d="M16.4 16.6l4.8 4.8"/></svg>
<div class="t" style="left:916.60px;top:474px;font-size:15.1px;line-height:30px;font-weight:400;color:#8a8a8a;transform:scaleX(0.9241);transform-origin:1.00px 0;">Search...</div>
<div style="position:absolute;left:1061px;top:471px;width:53.5px;height:37.5px;background:#262626;border:1px solid #4f45b8;border-radius:5px;box-sizing:border-box"></div>
<svg style="position:absolute;left:1077px;top:480px;stroke:#a89ef6;stroke-width:1.8;stroke-linecap:round" width="16" height="19" viewBox="0 0 16 19" fill="none"><circle cx="8.5" cy="4.5" r="3"/><path d="M1.5 18.5v-2a5 5 0 0 1 5-5h1.5"/></svg>
<svg style="position:absolute;left:1083.04px;top:486.04px" width="14.93" height="14.93"><use href="#logo"/></svg>
<svg style="position:absolute;left:1127.96px;top:477.16px" width="24.88" height="24.88"><use href="#logo"/></svg>
<svg style="position:absolute;left:1182px;top:480px;stroke:#6a5ef3;stroke-width:1.9;stroke-linecap:round;stroke-linejoin:round" width="20" height="20" viewBox="0 0 24 24" fill="none"><circle cx="8.5" cy="6" r="4"/><path d="M2.5 21v-2a4 4 0 0 1 4 -4h4.5"/><path d="M13.5 20.5l5.5 -5.5a1.8 1.8 0 0 1 2.6 2.6l-5.5 5.5h-2.6z"/></svg>
<div style="position:absolute;left:877px;top:526px;width:341.5px;height:52.5px;background:#2a2a2a;border:1px solid #4f45b8;border-radius:4px;box-sizing:border-box"></div>
<div class="t" style="left:879.70px;top:539px;font-size:16.0px;line-height:30px;font-weight:400;color:#f2f2f2;transform:scaleX(0.9858);transform-origin:1.00px 0;">BottomRow_MyTournament</div>
<div style="position:absolute;left:1076px;top:536.5px;width:93.5px;height:31.5px;background:#65c466;border-radius:6px"></div>
<div class="t" style="left:1100.20px;top:538px;font-size:14.55px;line-height:30px;font-weight:400;color:#1a1a1a;transform:scaleX(0.8673);transform-origin:0.00px 0;-webkit-text-stroke:0.32px #1a1a1a;">ACTIVE</div>
<div style="position:absolute;left:1184.0px;top:545.9px;width:3.199999999999818px;height:3.2000000000000455px;background:#fff;border-radius:50%"></div>
<div style="position:absolute;left:1184.0px;top:550.9px;width:3.199999999999818px;height:3.2000000000000455px;background:#fff;border-radius:50%"></div>
<div style="position:absolute;left:1184.0px;top:555.9px;width:3.199999999999818px;height:3.2000000000000455px;background:#fff;border-radius:50%"></div>
<div style="position:absolute;left:877px;top:580px;width:341.5px;height:50px;background:#333333;border-radius:0 0 4px 4px"></div>
<svg style="position:absolute;left:890.36px;top:592.76px" width="24.88" height="24.88"><use href="#logo"/></svg>
<div class="t" style="left:920.50px;top:591px;font-size:15.4px;line-height:30px;font-weight:400;color:#f2f2f2;transform:scaleX(1.0458);transform-origin:1.00px 0;">Default</div>
<div style="position:absolute;left:1097.5px;top:589px;width:62.5px;height:32px;background:#f9f9f9;border-radius:6px"></div>
<div style="position:absolute;left:1122px;top:574.5px;width:127px;height:104.0px;background:#0c0c0c;border-radius:6px;box-shadow:0 2px 6px rgba(0,0,0,0.4)"></div>
<div class="t" style="left:1134.00px;top:581px;font-size:15.4px;line-height:30px;font-weight:400;color:#f2f2f2;transform:scaleX(0.9095);transform-origin:1.00px 0;">Duplicate</div>
<div class="t" style="left:1134.00px;top:613px;font-size:15.1px;line-height:30px;font-weight:400;color:#f2f2f2;transform:scaleX(0.9000);transform-origin:1.00px 0;">Edit</div>
<div class="t" style="left:1134.00px;top:645px;font-size:15.4px;line-height:30px;font-weight:400;color:#742828;transform:scaleX(0.9070);transform-origin:1.00px 0;">Delete</div>
<div style="position:absolute;left:839px;top:383px;width:425.5px;height:368px;border:6px solid #e11d1d;box-sizing:border-box"></div>
</body></html>
